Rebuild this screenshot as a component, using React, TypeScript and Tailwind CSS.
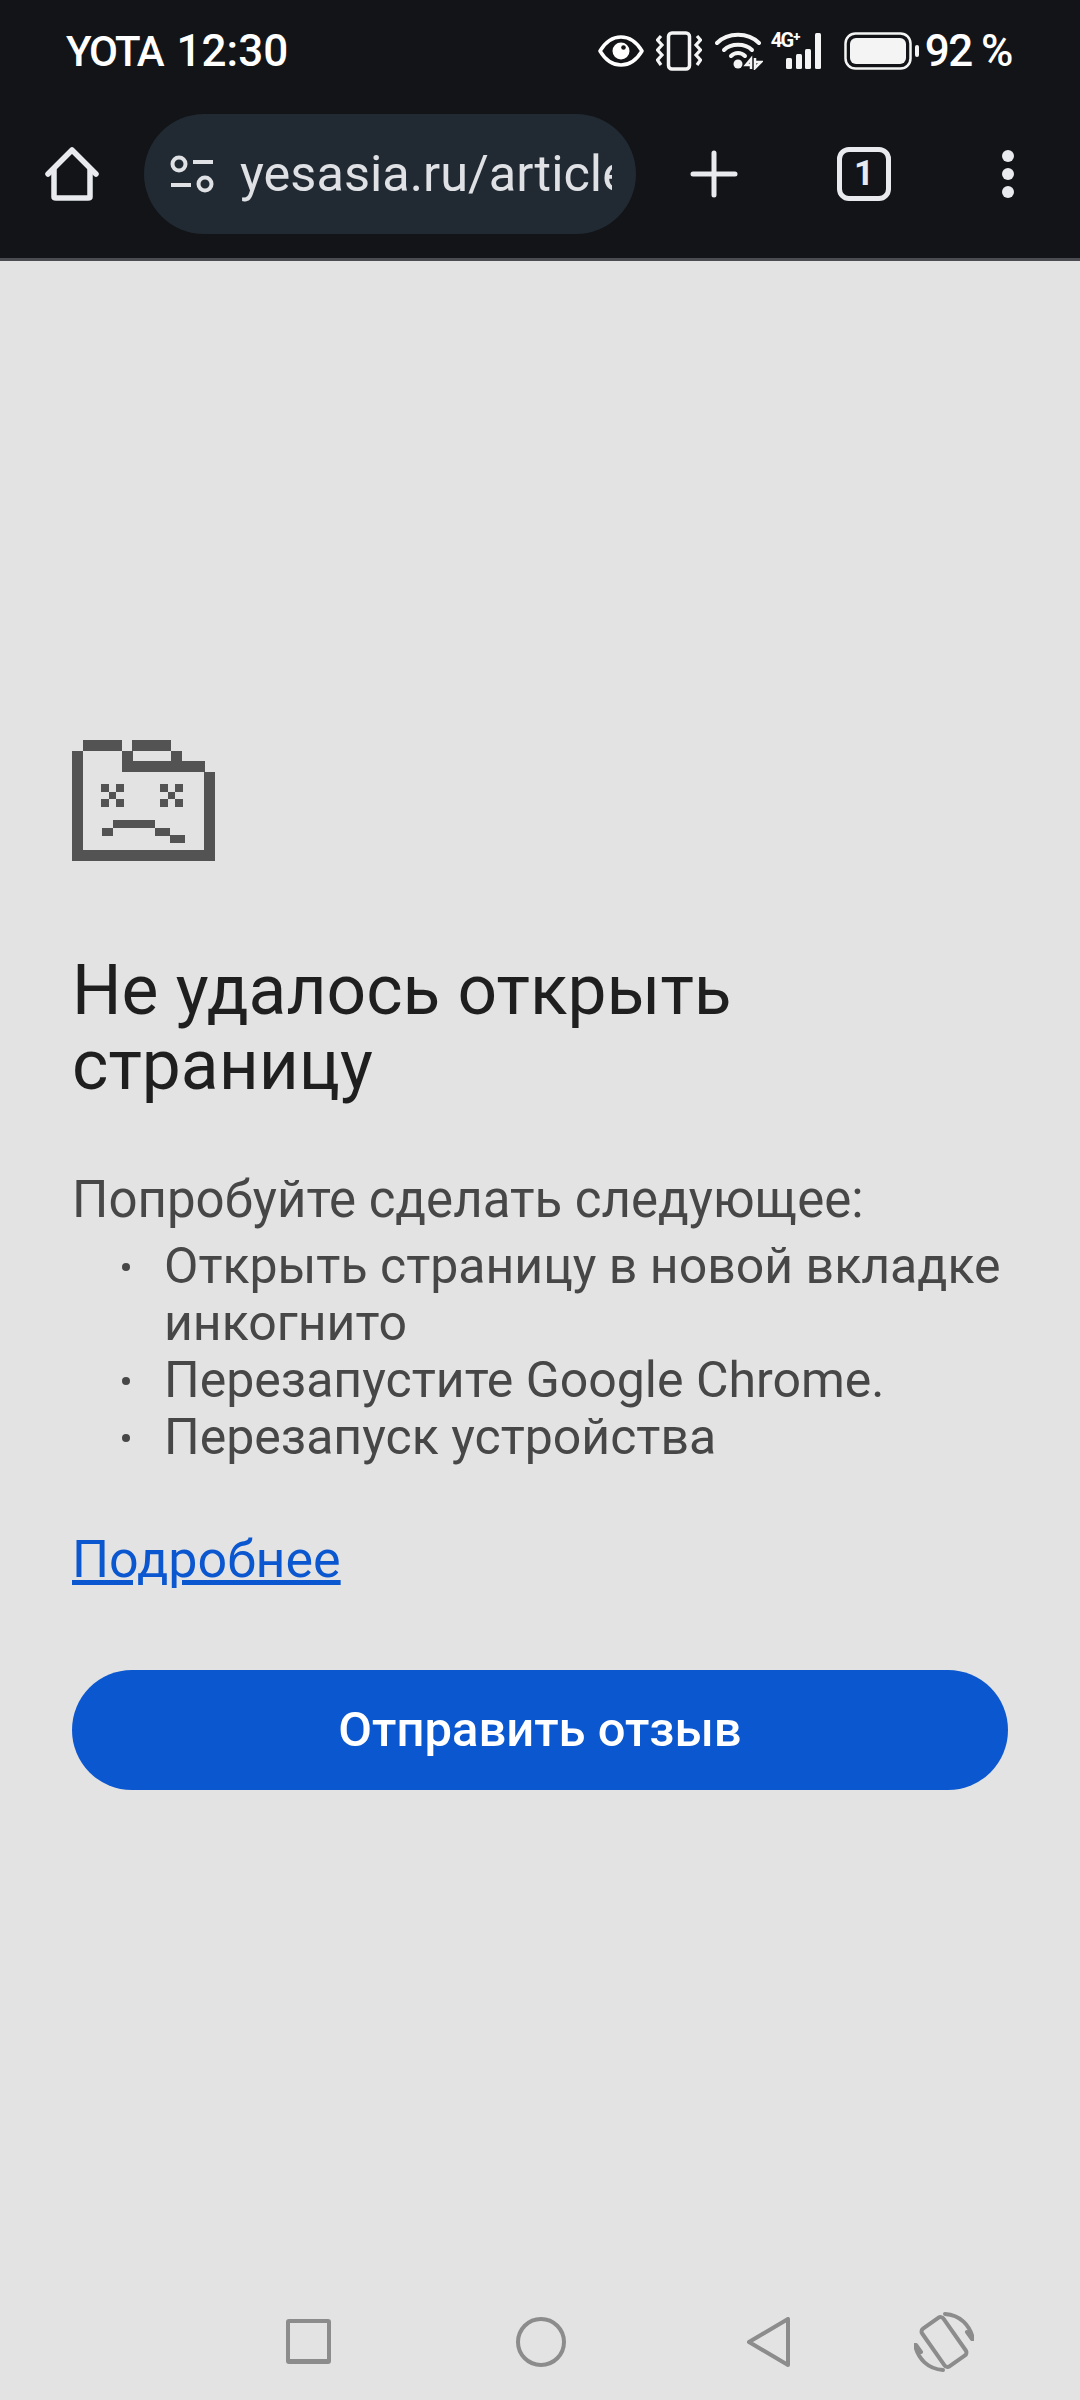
import React from 'react';

const FONT = { sans: "font-['Roboto','Noto_Sans',sans-serif]" };

// Status bar icons
const EyeIcon = () => (
  <svg width="46" height="32" viewBox="0 0 46 32" className="text-white">
    <path d="M2 16 C8 6 15 2 23 2 C31 2 38 6 44 16 C38 26 31 30 23 30 C15 30 8 26 2 16 Z" fill="none" stroke="currentColor" strokeWidth="3.5" strokeLinejoin="round" />
    <circle cx="23" cy="16" r="8.5" fill="currentColor" />
    <circle cx="25.5" cy="12.5" r="2.3" fill="#121417" />
  </svg>
);

const VibrateIcon = () => (
  <svg width="46" height="40" viewBox="0 0 46 40" fill="none" stroke="#f4f4f4">
    <rect x="12.500" y="2" width="21" height="36" rx="3.500" strokeWidth="3.500" />
    <path d="M5 5 L1.500 9 L6 14 L1.500 19 L6 24 L1.500 29 L5 34" strokeWidth="3.200" />
    <path d="M41 5 L44.500 9 L40 14 L44.500 19 L40 24 L44.500 29 L41 34" strokeWidth="3.200" />
  </svg>
);

const WifiIcon = () => (
  <svg width="48" height="38" viewBox="0 0 48 38" fill="none" stroke="#f4f4f4" strokeLinecap="round">
    <path d="M2 11 C13 0 33 0 44 11" strokeWidth="4" />
    <path d="M9 18 C16 11 30 11 37 18" strokeWidth="4" />
    <path d="M16 24 C20 20 26 20 30 24" strokeWidth="4" />
    <circle cx="23" cy="32" r="4.500" fill="#f4f4f4" stroke="none" />
    <path d="M36 37 V27 L31 33 H36 M40 26 V36 L46 30 H40" strokeWidth="2.500" strokeLinecap="butt" />
  </svg>
);

const SignalIcon = () => (
  <div className="relative w-[58px] h-[38px]">
    <span className="absolute left-0 top-[-3px] text-[20px] leading-[22px] font-bold text-white tracking-[-1.500px] font-['Roboto',sans-serif]">4G⁺</span>
    <svg width="58" height="38" viewBox="0 0 58 38" fill="#f4f4f4" className="absolute left-0 top-0">
      <rect x="15" y="26" width="6" height="11" rx="1.500" />
      <rect x="25" y="22" width="6" height="15" rx="1.500" />
      <rect x="34" y="17" width="6" height="20" rx="1.500" />
      <rect x="44" y="1" width="6" height="36" rx="1.500" />
    </svg>
  </div>
);

const BatteryIcon = () => (
  <svg width="76" height="38" viewBox="0 0 76 38">
    <rect x="1.500" y="1.500" width="65" height="35" rx="10" fill="none" stroke="#f4f4f4" strokeWidth="2.500" />
    <rect x="6" y="6" width="56" height="26" rx="6" fill="#f4f4f4" />
    <rect x="71" y="13" width="4" height="12" rx="2" fill="#f4f4f4" />
  </svg>
);

// Toolbar icons
const HomeIcon = () => (
  <svg width="54" height="54" viewBox="0 0 54 54" fill="none" stroke="#e8eaed" strokeWidth="5.500" strokeLinejoin="round" strokeLinecap="round">
    <path d="M3 27 L27 3 L51 27" />
    <path d="M9 23 V50 C9 51 10 51 11 51 H43 C44 51 45 51 45 50 V23" />
  </svg>
);

const SiteInfoIcon = () => (
  <svg width="44" height="38" viewBox="0 0 44 38" fill="none" stroke="#dfe1e5" strokeWidth="4">
    <circle cx="9" cy="9" r="6.500" />
    <path d="M23 7 H43" />
    <path d="M1 30 H21" />
    <circle cx="35" cy="29" r="6.500" />
  </svg>
);

const PlusIcon = () => (
  <svg width="48" height="48" viewBox="0 0 48 48" stroke="#e8eaed" strokeWidth="5" strokeLinecap="round">
    <path d="M24 3 V45 M3 24 H45" />
  </svg>
);

const SadTab = () => (
  <svg width="200" height="150" viewBox="0 0 600 450" fill="#535353" className="-ml-[22px] -mt-5 block">
    <path d="M66 93 H99 V390 H462 V156 H495 V423 H66 Z" />
    <rect x="99" y="60" width="117" height="33" />
    <rect x="246" y="60" width="117" height="33" />
    <path d="M216 93 H249 V123 H363 V93 H396 V123 H465 V156 H216 Z" />
    <path d="M153 192 H177 V216 H198 V192 H222 V216 H198 V237 H222 V261 H198 V237 H177 V261 H153 V237 H177 V216 H153 Z" />
    <path d="M330 192 H354 V216 H375 V192 H399 V216 H375 V237 H399 V261 H375 V237 H354 V261 H330 V237 H354 V216 H330 Z" />
    <rect x="189" y="300" width="126" height="24" />
    <rect x="156" y="324" width="33" height="24" />
    <rect x="315" y="324" width="45" height="24" />
    <rect x="360" y="345" width="45" height="24" />
  </svg>
);

const RotateIcon = () => (
  <svg width="60" height="60" viewBox="0 0 60 60" fill="none" stroke="#8c8c8c" strokeWidth="4" strokeLinecap="round" strokeLinejoin="round">
    <rect x="17" y="7" width="26" height="46" rx="3.500" transform="rotate(-35 30 30)" />
    <path d="M31 2 C46 3 56 13 59 27" />
    <path d="M58 27 L53 20" />
    <path d="M29 58 C14 57 4 47 1 33" />
    <path d="M2 33 L7 40" />
  </svg>
);

const LIST_ITEMS = ['Открыть страницу в новой вкладке инкогнито', 'Перезапустите Google Chrome.', 'Перезапуск устройства'];

export default function App() {
  return (
    <div className={`w-[1080px] h-[2400px] bg-[#e3e3e3] flex flex-col ${FONT.sans}`}>
      {/* Шапка браузера */}
      <header className="h-[261px] shrink-0 bg-[#121417] border-b-[3px] border-[#4a4c52] flex flex-col">
        <div className="h-[102px] flex items-start justify-between pl-[66px] pr-[68px] pt-[27px]">
          <div className="text-white leading-[48px] font-medium whitespace-nowrap flex items-baseline">
            <span className="text-[42px] tracking-[-2px]">YOTA</span>
            <span className="ml-[14px] text-[44px]">12:30</span>
          </div>
          <div className="flex items-center h-[48px]">
            <EyeIcon />
            <div className="ml-[12px]"><VibrateIcon /></div>
            <div className="ml-[13px]"><WifiIcon /></div>
            <div className="ml-[8px]"><SignalIcon /></div>
            <div className="ml-[15px]"><BatteryIcon /></div>
            <span className="ml-[5px] text-white text-[44px] leading-[48px] font-medium tracking-[-1.500px] whitespace-nowrap">92 %</span>
          </div>
        </div>
        <div className="h-[120px] mt-[12px] flex items-center">
          <div className="ml-[45px] w-[54px] h-[54px]"><HomeIcon /></div>
          <div className="ml-[45px] w-[492px] h-[120px] rounded-full bg-[#212a33] flex items-center pl-[26px] pr-[24px]">
            <SiteInfoIcon />
            <div className="ml-[26px] flex-1 overflow-hidden whitespace-nowrap text-[50.5px] leading-[62px] text-[#dfe1e5]">yesasia.ru/article</div>
          </div>
          <div className="ml-[54px]"><PlusIcon /></div>
          <div className="ml-[99px] w-[54px] h-[54px] rounded-[12px] border-[5px] border-[#e8eaed] flex items-center justify-center text-[35px] font-bold text-[#e8eaed]">1</div>
          <div className="ml-[111px] flex flex-col gap-[6px]">
            <div className="w-[12px] h-[12px] rounded-full bg-[#e8eaed]" />
            <div className="w-[12px] h-[12px] rounded-full bg-[#e8eaed]" />
            <div className="w-[12px] h-[12px] rounded-full bg-[#e8eaed]" />
          </div>
        </div>
      </header>

      {/* Страница ошибки */}
      <main className="flex-1 pl-[72px] pr-[72px] pt-[479px] flex flex-col">
        <SadTab />
        <h1 className="mt-[83px] text-[69.5px] leading-[75px] font-normal text-[#1f1f1f]">Не удалось открыть страницу</h1>
        <p className="mt-[68px] text-[51px] leading-[57px] text-[#474747]">Попробуйте сделать следующее:</p>
        <ul className="mt-[10px] text-[50px] leading-[57px] text-[#474747]">
          {LIST_ITEMS.map((item) => (
            <li key={item} className="flex">
              <span className="w-[92px] shrink-0 relative"><span className="absolute left-[50px] top-[25px] w-[8px] h-[8px] rounded-full bg-[#474747]" /></span>
              <span>{item}</span>
            </li>
          ))}
        </ul>
        <a className="mt-[65px] text-[52px] leading-[57px] text-[#0b57d0] underline self-start">Подробнее</a>
        <button className="mt-[82px] h-[120px] rounded-full bg-[#0b57d0] text-white text-[49px] font-medium">Отправить отзыв</button>
      </main>

      {/* Навигация Android */}
      <nav className="h-[88px] shrink-0 flex items-start pl-[286px]">
        <div className="w-[45px] h-[45px] mt-[7px] border-[4px] border-b-[5px] border-[#8c8c8c] rounded-[3px]" />
        <div className="ml-[185px] w-[50px] h-[50px] mt-[5px] rounded-full border-[4px] border-[#8c8c8c]" />
        <svg width="44" height="50" viewBox="0 0 44 50" fill="none" stroke="#8c8c8c" strokeWidth="4" strokeLinejoin="round" className="ml-[181px] mt-[5px]">
          <path d="M41 2 V48 L2 25 Z" />
        </svg>
        <div className="ml-[123px]"><RotateIcon /></div>
      </nav>
    </div>
  );
}
